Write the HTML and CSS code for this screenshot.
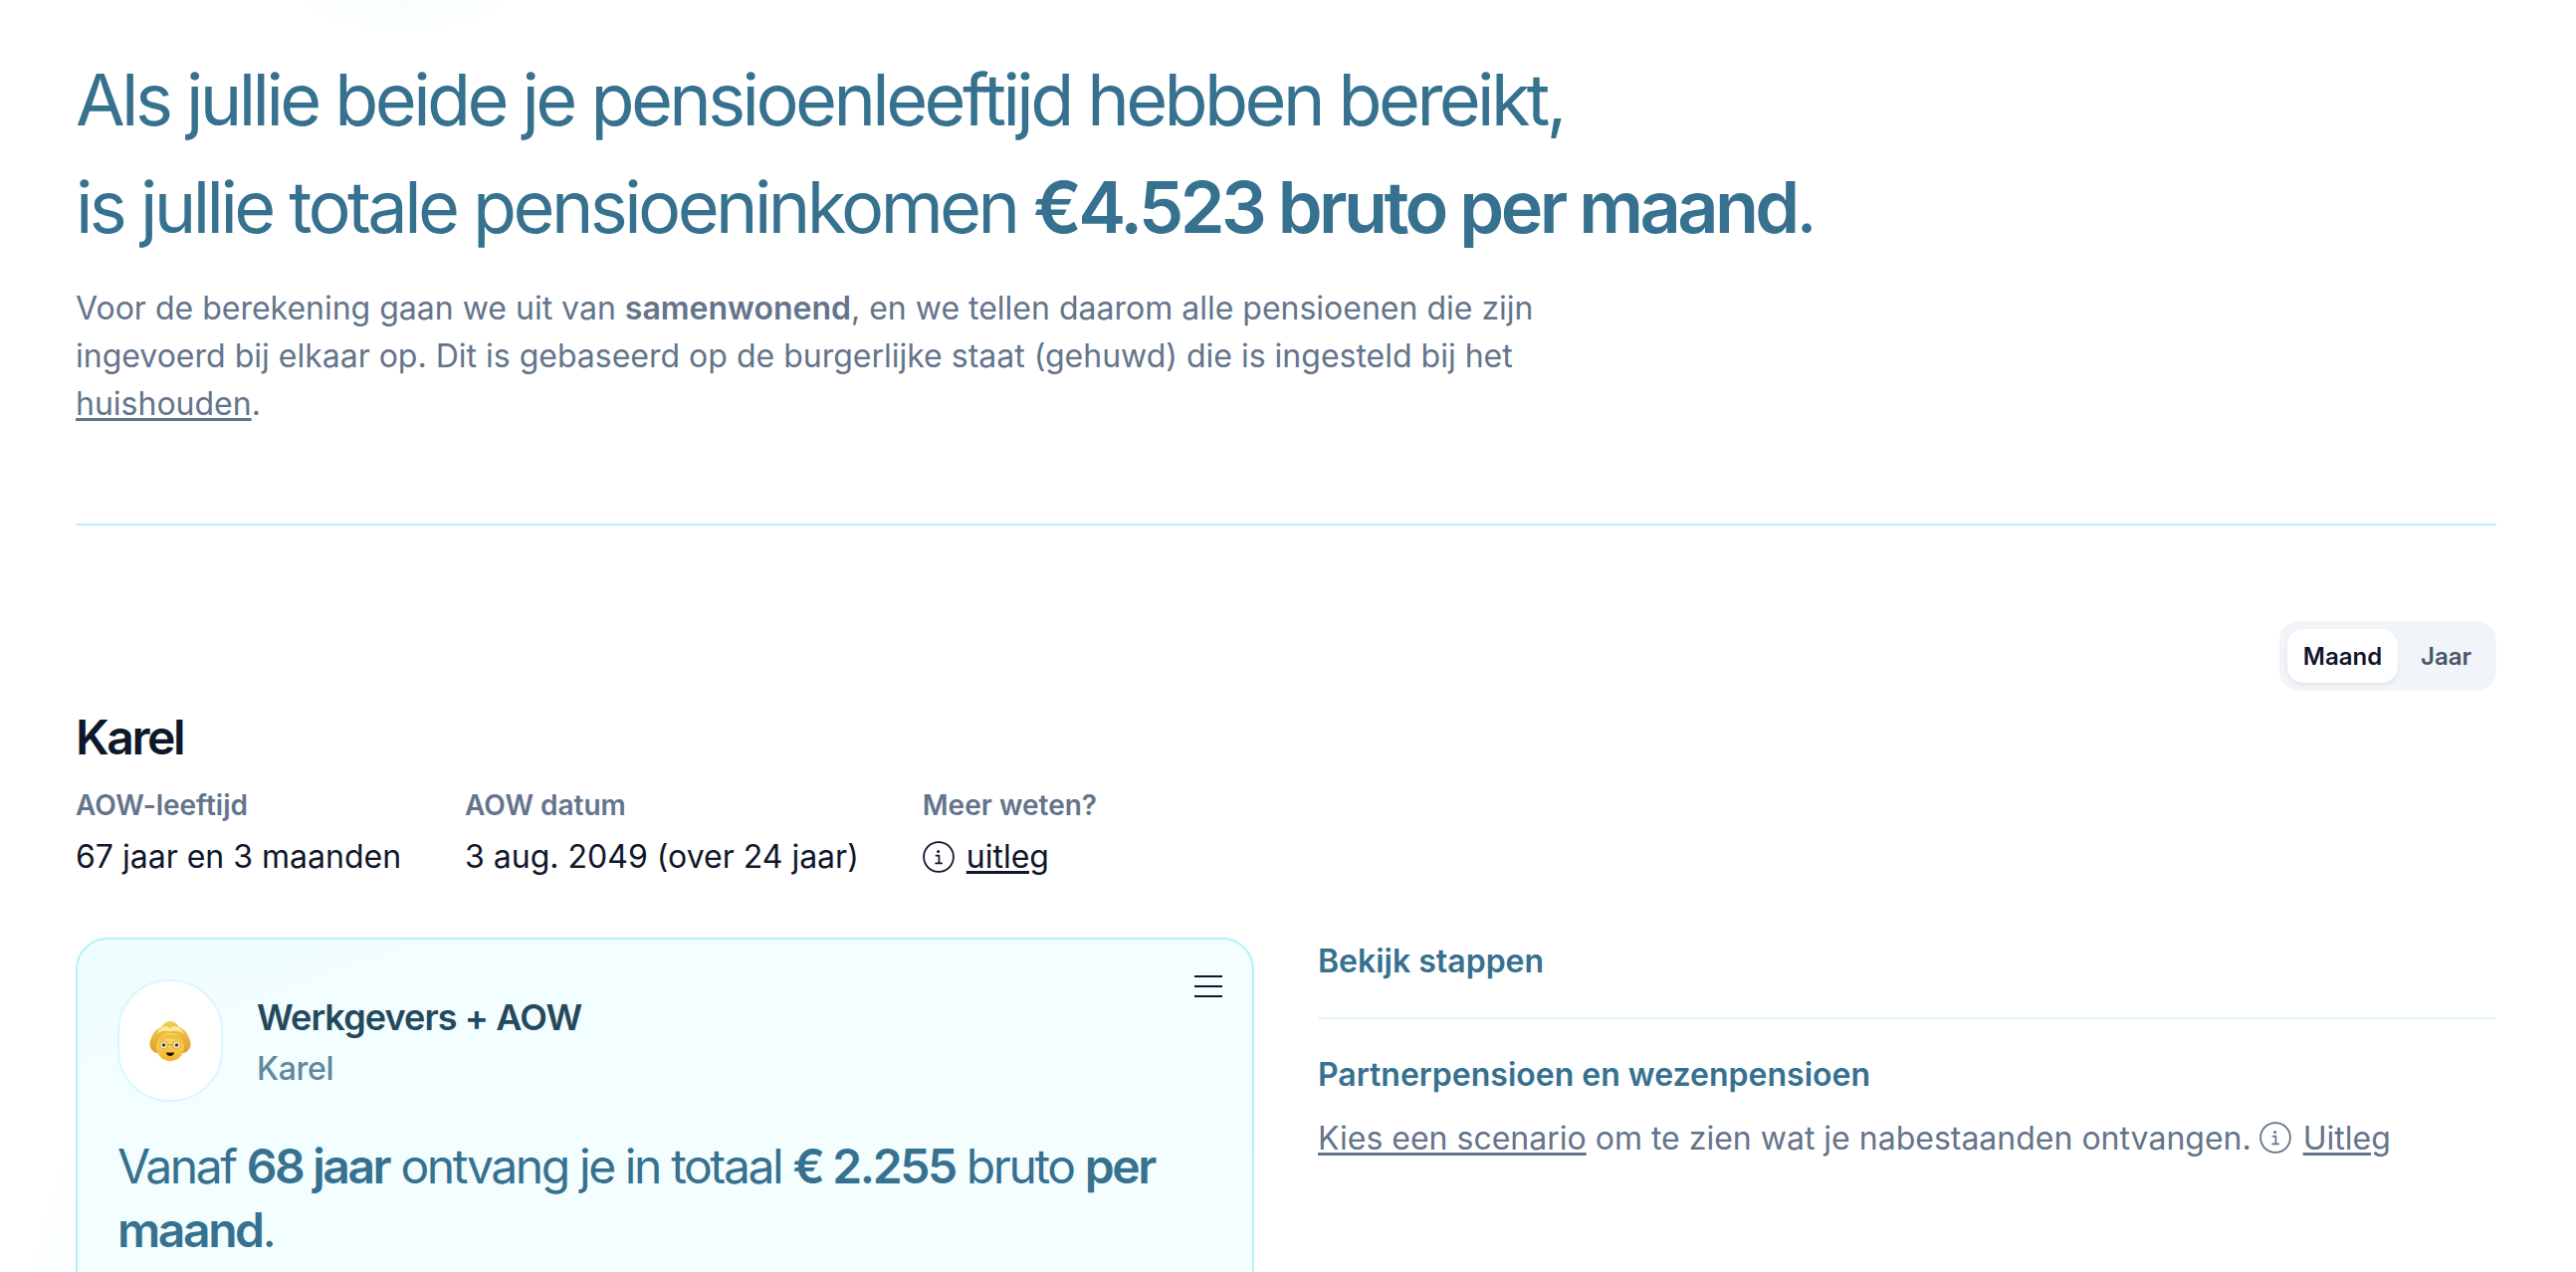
FILE: index.html
```html
<!DOCTYPE html>
<html lang="nl">
<head>
<meta charset="utf-8">
<title>Pensioen</title>
<link rel="stylesheet" href="styles.css">
</head>
<body>
<div class="glow glow-top"></div>
<div class="glow glow-card"></div>
<main class="page">
  <section class="intro">
    <h1 class="headline">Als jullie beide je pensioenleeftijd hebben bereikt,<br>is jullie totale pensioeninkomen <strong>€4.523 bruto per maand</strong>.</h1>
    <p class="lead">Voor de berekening gaan we uit van <strong>samenwonend</strong>, en we tellen daarom alle pensioenen die zijn ingevoerd bij elkaar op. Dit is gebaseerd op de burgerlijke staat (gehuwd) die is ingesteld bij het <a href="#">huishouden</a>.</p>
  </section>
  <hr class="rule">
  <div class="toggle-row">
    <div class="toggle">
      <span class="toggle-item is-active">Maand</span>
      <span class="toggle-item">Jaar</span>
    </div>
  </div>
  <h2 class="person">Karel</h2>
  <dl class="facts">
    <div class="fact"><dt>AOW-leeftijd</dt><dd>67 jaar en 3 maanden</dd></div>
    <div class="fact"><dt>AOW datum</dt><dd>3 aug. 2049 (over 24 jaar)</dd></div>
    <div class="fact"><dt>Meer weten?</dt><dd class="info-line">
      <svg class="info-icon" viewBox="0 0 32 32" aria-hidden="true"><circle cx="16" cy="16" r="14.9" fill="none" stroke="currentColor" stroke-width="1.8"/><circle cx="15.6" cy="10.4" r="1.5" fill="currentColor"/><path d="M12.8 14.6h3.6v7.6M12.4 22.4h7.4" fill="none" stroke="currentColor" stroke-width="1.7"/></svg>
      <a href="#">uitleg</a></dd></div>
  </dl>
  <div class="columns">
    <article class="card">
      <button class="menu" aria-label="Menu"><span></span><span></span><span></span></button>
      <header class="card-head">
        <div class="avatar">
          <svg class="emoji" viewBox="0 0 40 40" aria-hidden="true">
            <defs>
              <linearGradient id="hair" x1="0" y1="0" x2="0" y2="1"><stop offset="0" stop-color="#f6cd52"/><stop offset="1" stop-color="#d99f26"/></linearGradient>
              <linearGradient id="face" x1="0" y1="0" x2="0" y2="1"><stop offset="0" stop-color="#fde070"/><stop offset="1" stop-color="#f0b32c"/></linearGradient>
            </defs>
            <path d="M20 0C24 0 27 3 29 6C35 8 39 14 40.500 22C41 28 36 32 33 32H7C4 32 -1 28 -.5 22C1 14 5 8 11 6C13 3 16 0 20 0Z" fill="url(#hair)"/>
            <path d="M20 7.500C16 3 9 6 6.500 13C10 9.500 15 8.500 20 10.500C25 8.500 30 9.500 33.500 13C31 6 24 3 20 7.500Z" fill="#fde9a0"/>
            <ellipse cx="20" cy="26" rx="14" ry="14" fill="url(#face)"/>
            <path d="M5.500 25C7 16 14 12 20 13.500C26 12 33 16 34.500 25C31 19.500 25 17.500 20 17.500C15 17.500 9 19.500 5.500 25Z" fill="#f0c040"/>
            <circle cx="13.500" cy="24" r="3.900" fill="#fdeaa8" stroke="#b8913f" stroke-width=".7"/>
            <circle cx="26.500" cy="24" r="3.900" fill="#fdeaa8" stroke="#b8913f" stroke-width=".7"/>
            <path d="M17.400 23.500h5.200" stroke="#b8913f" stroke-width=".7" fill="none"/>
            <circle cx="13.500" cy="24" r="1.700" fill="#4a3a22"/>
            <circle cx="26.500" cy="24" r="1.700" fill="#4a3a22"/>
            <path d="M16 31.500h8c0 2-1.800 3.500-4 3.500s-4-1.500-4-3.500z" fill="#20140a"/>
          </svg>
        </div>
        <div class="card-title">
          <h3>Werkgevers + AOW</h3>
          <p>Karel</p>
        </div>
      </header>
      <p class="card-summary">Vanaf <strong>68 jaar</strong> ontvang je in totaal <strong>€ 2.255</strong> bruto <strong>per maand</strong>.</p>
    </article>
    <aside class="side">
      <h4 class="side-title">Bekijk stappen</h4>
      <hr class="side-rule">
      <h4 class="side-title">Partnerpensioen en wezenpensioen</h4>
      <p class="side-text"><a href="#">Kies een scenario</a> om te zien wat je nabestaanden ontvangen.
        <svg class="info-icon side-icon" viewBox="0 0 32 32" aria-hidden="true"><circle cx="16" cy="16" r="14.9" fill="none" stroke="currentColor" stroke-width="1.8"/><circle cx="15.6" cy="10.4" r="1.5" fill="currentColor"/><path d="M12.8 14.6h3.6v7.6M12.4 22.4h7.4" fill="none" stroke="currentColor" stroke-width="1.7"/></svg>
        <a href="#">Uitleg</a></p>
    </aside>
  </div>
</main>
</body>
</html>
```
FILE: styles.css
```css
* { box-sizing: border-box; }
html, body { margin: 0; height: 100%; overflow: hidden; background: #fff; }
body { font-family: Inter, "Liberation Sans", sans-serif; color: #0f172a; position: relative; }

.glow { position: absolute; pointer-events: none; }
.glow-top { left: 290px; top: -40px; width: 230px; height: 76px; background: radial-gradient(closest-side, #f7fefe, rgba(255,255,255,0)); }
.glow-card { left: 20px; top: 1060px; width: 300px; height: 560px; background: radial-gradient(closest-side, #eefcfe, rgba(255,255,255,0)); }

.page { position: relative; width: 2432px; margin-left: 76px; padding-top: 46px; }

.headline { margin: 0; font-size: 72px; line-height: 108px; font-weight: 400; letter-spacing: -3.6px; color: #36718f; }
.headline strong { font-weight: 600; }
.lead { margin: 24px 0 0; width: 1520px; font-size: 32px; line-height: 48px; color: #64748b; }
.lead strong { font-weight: 600; }
.lead a, .side-text a { color: #64748b; text-decoration: underline; text-decoration-thickness: 3px; text-underline-offset: 3px; }

.rule { margin: 96px 0 0; border: 0; height: 2px; background: #b6f0fa; }

.toggle-row { display: flex; justify-content: flex-end; margin-top: 96px; }
.toggle { display: flex; padding: 8px; border-radius: 20px; background: #f1f5f9; }
.toggle-item { display: flex; align-items: center; justify-content: center; width: 91px; height: 54px; padding-left: 6px; border-radius: 16px; font-size: 24px; font-weight: 600; color: #475569; }
.toggle-item.is-active { width: 111px; padding-left: 0; background: #fff; color: #0f172a; box-shadow: 0 2px 4px rgba(15,23,42,.08); }

.person { margin: 15px 0 0; font-size: 48px; line-height: 64px; font-weight: 600; letter-spacing: -2.4px; color: #0f172a; }

.facts { display: flex; gap: 64px; margin: 16px 0 0; }
.fact dt { font-size: 28px; line-height: 40px; font-weight: 600; color: #64748b; }
.fact dd { margin: 8px 0 0; font-size: 32px; line-height: 48px; color: #0f172a; }
.info-line { display: flex; align-items: center; gap: 12px; }
.info-line a { color: inherit; text-decoration-thickness: 3px; text-underline-offset: 3px; }
.info-icon { display: inline-block; width: 32px; height: 32px; vertical-align: -4px; }
.side-icon { margin: 0 3px 0 -1px; }

.columns { display: grid; grid-template-columns: 1184px 1184px; gap: 64px; margin-top: 57px; }
.card { position: relative; min-height: 520px; padding: 40px; border: 2px solid #b6f0fa; border-radius: 32px; background: linear-gradient(160deg, #f0fdff, #f8ffff); }
.menu { position: absolute; top: 36px; right: 30px; display: flex; flex-direction: column; gap: 8px; width: 28px; padding: 0; border: 0; background: none; }
.menu span { display: block; height: 2px; background: #0f172a; }
.card-head { display: flex; align-items: stretch; gap: 34px; }
.avatar { display: flex; align-items: center; justify-content: center; width: 106px; height: 123px; border: 2px solid #d9f8fd; border-radius: 52px; background: #fff; }
.emoji { width: 40px; height: 40px; overflow: visible; }
.card-title { display: flex; flex-direction: column; justify-content: center; padding-top: 3px; }
.card-title h3 { margin: 0; font-size: 36px; line-height: 52px; font-weight: 600; letter-spacing: -.9px; color: #24495c; }
.card-title p { margin: 1px 0 0; font-size: 32px; line-height: 50px; font-weight: 500; letter-spacing: -.3px; color: #64879b; }
.card-summary { margin: 33px 0 0; font-size: 48px; line-height: 64px; font-weight: 400; letter-spacing: -2.4px; color: #36718f; }
.card-summary strong { font-weight: 600; }

.side-title { margin: 0; font-size: 32px; line-height: 48px; font-weight: 600; color: #36718f; }
.side-rule { margin: 32px 0 32px; border: 0; height: 2px; background: #e0f8fb; }
.side-text { margin: 16px 0 0; font-size: 32px; line-height: 48px; color: #64748b; }
```
